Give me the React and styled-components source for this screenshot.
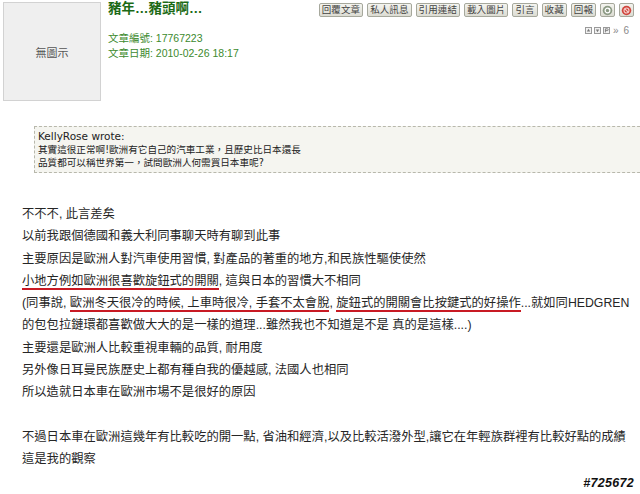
import styled, { createGlobalStyle } from "styled-components";

const Global = createGlobalStyle`
  html, body {
    margin: 0;
    padding: 0;
    background: #ffffff;
  }
`;

const Page = styled.div`
  position: relative;
  width: 640px;
  height: 494px;
  overflow: hidden;
  background: #ffffff;
  font-family: "Liberation Sans", "Noto Sans CJK TC", sans-serif;
`;

const Header = styled.div`
  display: flex;
  align-items: flex-start;
  padding: 2px 6px 0 3px;
`;

const Avatar = styled.div`
  width: 96px;
  height: 97px;
  border: 1px solid #d2d2d2;
  background: #efefef;
  display: flex;
  align-items: center;
  justify-content: center;
  color: #555;
  font-size: 11px;
  flex-shrink: 0;
`;

const Info = styled.div`
  margin-left: 7px;
  display: flex;
  flex-direction: column;
`;

const Title = styled.div`
  font-size: 13.5px;
  line-height: 16px;
  font-weight: bold;
  color: #1c6a16;
  margin-top: -1px;
`;

const Meta = styled.div`
  font-size: 10.5px;
  line-height: 15px;
  color: #3c8a2e;
  margin-top: ${(p) => (p.$first ? "14px" : "0")};
`;

const Tools = styled.div`
  margin-left: auto;
  display: flex;
  flex-direction: column;
  align-items: flex-end;
`;

const ButtonRow = styled.div`
  display: flex;
  gap: 4px;
  margin-top: 1px;
`;

const Btn = styled.span`
  display: inline-flex;
  align-items: center;
  justify-content: center;
  height: 12px;
  padding: 0 ${(p) => (p.$icon ? "1px" : "2px")};
  border: 1px solid #a6a89c;
  border-radius: 2px;
  background: linear-gradient(#f4f4ef, #dcdcd3);
  color: #444;
  font-size: 9.5px;
  letter-spacing: 0.1px;
  line-height: 12px;
  white-space: nowrap;
`;

const NavRow = styled.div`
  display: flex;
  align-items: center;
  gap: 2px;
  margin-top: 8px;
  margin-right: 4px;
  color: #8a8a8a;
  font-size: 10px;
`;

const NavBox = styled.span`
  display: inline-flex;
  width: 7px;
  height: 7px;
`;

const PageNo = styled.span`
  margin-left: 1px;
  letter-spacing: 1px;
`;

const Quote = styled.div`
  margin: 25px -20px 0 34px;
  padding: 3px;
  border: 1px dashed #b8b8ac;
  background: #f5f5f0;
  color: #222;
  font-family: "DejaVu Sans", "Noto Sans CJK TC", sans-serif;
  font-size: 9.6px;
  line-height: 13px;
`;

const QuoteHead = styled.div`
  font-size: 10.5px;
`;

const Body = styled.div`
  margin: 30px 0 0 22px;
  color: #262626;
  font-size: 12.3px;
  line-height: 22.3px;
  white-space: nowrap;
`;

const Line = styled.div`
  min-height: 22.3px;
`;

const Mark = styled.span`
  border-bottom: 2px solid #c81a24;
`;

const Stamp = styled.div`
  position: absolute;
  right: 6px;
  bottom: 4px;
  font-family: "Liberation Sans", sans-serif;
  font-weight: bold;
  font-style: italic;
  font-size: 12.5px;
  color: #111;
  letter-spacing: 0.3px;
  text-shadow: 1px 0 0 #fff, -1px 0 0 #fff, 0 1px 0 #fff, 0 -1px 0 #fff;
`;

const RefreshIcon = () => (
  <svg width="11" height="11" viewBox="0 0 12 12">
    <circle cx="6" cy="6" r="5.2" fill="#8c9a84" />
    <circle cx="6" cy="6" r="2.6" fill="none" stroke="#fff" strokeWidth="1.3" />
    <path d="M8.4 3.2 L9.2 5.4 L7 5" fill="#fff" />
  </svg>
);

const DeleteIcon = () => (
  <svg width="11" height="11" viewBox="0 0 12 12">
    <circle cx="6" cy="6" r="5.2" fill="#d0463e" />
    <circle cx="6" cy="6" r="2.7" fill="none" stroke="#f6d0cc" strokeWidth="1.2" />
    <path d="M4.3 4.3 L7.7 7.7" stroke="#f6d0cc" strokeWidth="1.2" />
  </svg>
);

const NavIcon = ({ kind }) => (
  <NavBox>
    <svg width="7" height="7" viewBox="0 0 7 7">
      <rect x="0.5" y="0.5" width="6" height="6" fill="#f2f2f2" stroke="#9a9a9a" />
      {kind === "up" && <path d="M3.5 1.8 L5.2 4.4 L1.8 4.4 Z" fill="#777" />}
      {kind === "down" && <path d="M3.5 5.2 L5.2 2.6 L1.8 2.6 Z" fill="#777" />}
      {kind === "p" && <path d="M2.4 5.4 V1.8 H4.3 Q5.2 1.8 5.2 2.7 Q5.2 3.6 4.3 3.6 H2.4" fill="none" stroke="#777" strokeWidth="0.9" />}
    </svg>
  </NavBox>
);

const buttons = ["回覆文章", "私人訊息", "引用連結", "載入圖片", "引言", "收藏", "回報"];

export default function App() {
  return (
    <>
      <Global />
      <Page>
        <Header>
          <Avatar>無圖示</Avatar>
          <Info>
            <Title>豬年…豬頭啊…</Title>
            <Meta $first>文章編號: 17767223</Meta>
            <Meta>文章日期: 2010-02-26 18:17</Meta>
          </Info>
          <Tools>
            <ButtonRow>
              {buttons.map((b) => (
                <Btn key={b}>{b}</Btn>
              ))}
              <Btn $icon>
                <RefreshIcon />
              </Btn>
              <Btn $icon>
                <DeleteIcon />
              </Btn>
            </ButtonRow>
            <NavRow>
              <NavIcon kind="up" />
              <NavIcon kind="down" />
              <NavIcon kind="p" />
              <PageNo>» 6</PageNo>
            </NavRow>
          </Tools>
        </Header>

        <Quote>
          <QuoteHead>KellyRose wrote:</QuoteHead>
          <div>其實這很正常啊!歐洲有它自己的汽車工業，且歷史比日本還長</div>
          <div>品質都可以稱世界第一，試問歐洲人何需買日本車呢?</div>
        </Quote>

        <Body>
          <Line>不不不, 此言差矣</Line>
          <Line>以前我跟個德國和義大利同事聊天時有聊到此事</Line>
          <Line>主要原因是歐洲人對汽車使用習慣, 對產品的著重的地方,和民族性驅使使然</Line>
          <Line>
            <Mark>小地方例如歐洲很喜歡旋鈕式的開關</Mark>, 這與日本的習慣大不相同
          </Line>
          <Line>
            (同事說, <Mark>歐洲冬天很冷的時候, 上車時很冷, 手套不太會脫</Mark>,{" "}
            <Mark>旋鈕式的開關會比按鍵式的好操作</Mark>...就如同HEDGREN
          </Line>
          <Line>的包包拉鏈環都喜歡做大大的是一樣的道理...雖然我也不知道是不是 真的是這樣....)</Line>
          <Line>主要還是歐洲人比較重視車輛的品質, 耐用度</Line>
          <Line>另外像日耳曼民族歷史上都有種自我的優越感, 法國人也相同</Line>
          <Line>所以造就日本車在歐洲市場不是很好的原因</Line>
          <Line />
          <Line>不過日本車在歐洲這幾年有比較吃的開一點, 省油和經濟,以及比較活潑外型,讓它在年輕族群裡有比較好點的成績</Line>
          <Line>這是我的觀察</Line>
        </Body>

        <Stamp>#725672</Stamp>
      </Page>
    </>
  );
}
